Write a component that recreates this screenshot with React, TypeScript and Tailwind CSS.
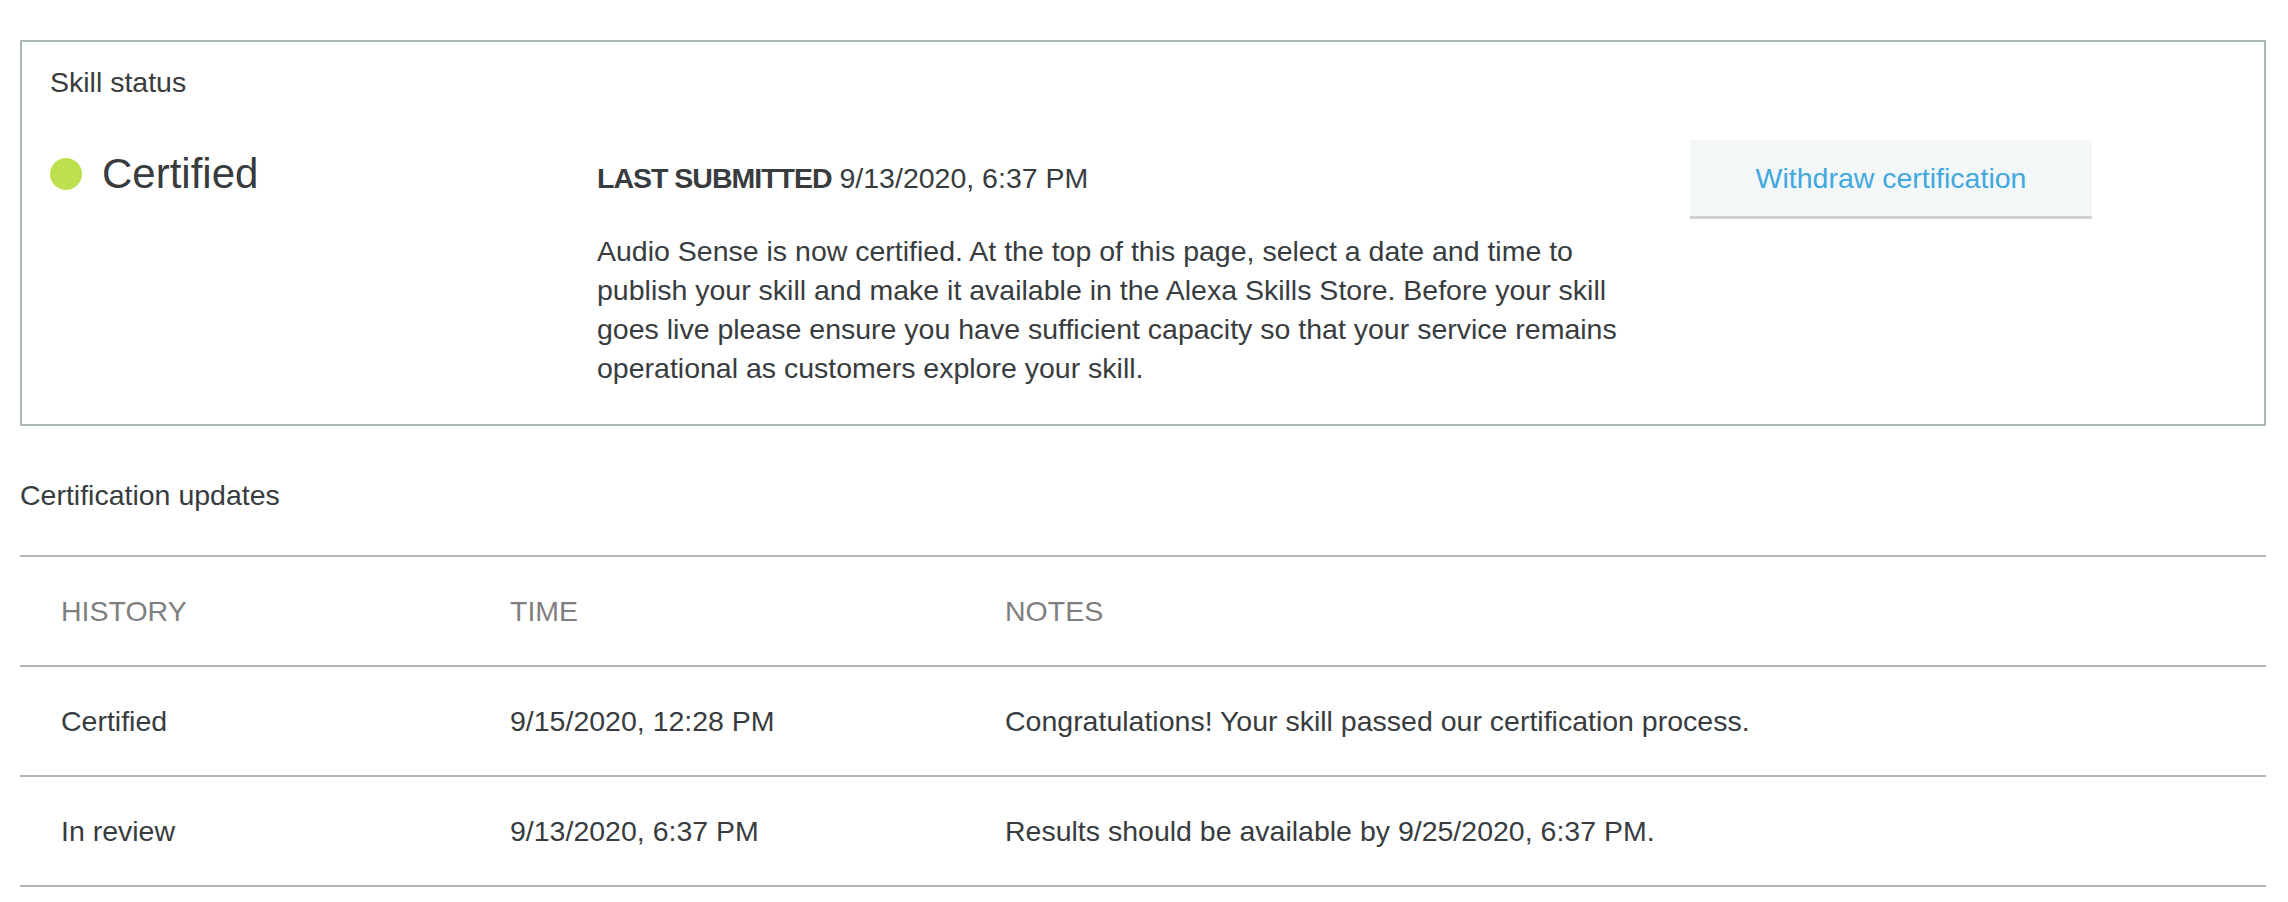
export default function App() {
  const rows = [
    { history: "Certified", time: "9/15/2020, 12:28 PM", notes: "Congratulations! Your skill passed our certification process." },
    { history: "In review", time: "9/13/2020, 6:37 PM", notes: "Results should be available by 9/25/2020, 6:37 PM." },
  ];
  return (
    <div className="min-h-screen bg-white pt-[40px] pl-[20px] pr-[22px] font-['Liberation_Sans',Arial,sans-serif] text-[28.5px] leading-[40px] text-[#383c3e]">
      <section className="border-2 border-[#aab7b8] px-[28px] pt-[20px] pb-[36px]">
        <div>Skill status</div>
        <div className="mt-[38px] flex items-start">
          <div className="mt-[10px] flex w-[547px] items-center gap-[20px]">
            <span className="block h-[32px] w-[32px] rounded-full bg-[#bde04f]" />
            <span className="text-[42px] leading-[48px]">Certified</span>
          </div>
          <div className="mt-[18px] w-[1093px]">
            <div className="whitespace-nowrap">
              <span className="font-bold tracking-[-1px]">LAST SUBMITTED</span> 9/13/2020, 6:37 PM
            </div>
            <p className="mt-[34px] whitespace-nowrap leading-[39px]">
              Audio Sense is now certified. At the top of this page, select a date and time to
              <br />
              publish your skill and make it available in the Alexa Skills Store. Before your skill
              <br />
              goes live please ensure you have sufficient capacity so that your service remains
              <br />
              operational as customers explore your skill.
            </p>
          </div>
          <button className="h-[79px] w-[402px] shrink-0 border-b-[3px] border-[#d0d3d4] bg-[#f3f7f8] leading-[40px] text-[#41a8df]">
            Withdraw certification
          </button>
        </div>
      </section>

      <div className="mt-[49px]">Certification updates</div>

      <div className="mt-[40px] border-b-2 border-[#b3b3bb]">
        <div className="grid h-[110px] grid-cols-[449px_495px_1fr] items-center border-t-2 border-[#b3b3bb] text-[#7f7f7f]">
          <div className="pl-[41px]">HISTORY</div>
          <div className="pl-[41px]">TIME</div>
          <div className="pl-[41px]">NOTES</div>
        </div>
        {rows.map((r) => (
          <div
            key={r.history}
            className="grid h-[110px] grid-cols-[449px_495px_1fr] items-center border-t-2 border-[#b3b3bb]"
          >
            <div className="pl-[41px]">{r.history}</div>
            <div className="pl-[41px]">{r.time}</div>
            <div className="pl-[41px]">{r.notes}</div>
          </div>
        ))}
      </div>
    </div>
  );
}
